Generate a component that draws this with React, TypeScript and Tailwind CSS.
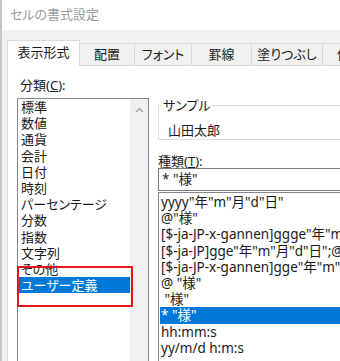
import React from 'react'

const CATEGORIES = [
  '標準', '数値', '通貨', '会計', '日付', '時刻', 'パーセンテージ',
  '分数', '指数', '文字列', 'その他', 'ユーザー定義',
]

const FORMATS = [
  'yyyy"年"m"月"d"日"',
  '@"様"',
  '[$-ja-JP-x-gannen]ggge"年"m"月"d"日"',
  '[$-ja-JP]gge"年"m"月"d"日";@',
  '[$-ja-JP-x-gannen]gge"年"m"月"d"日"',
  '@ "様"',
  ' "様"',
  '* "様"',
  'hh:mm:s',
  'yy/m/d h:m:s',
]

const TABS = [
  { label: '配置', w: 'w-[55px]' },
  { label: 'フォント', w: 'w-[57px]' },
  { label: '罫線', w: 'w-[60px]' },
  { label: '塗りつぶし', w: 'w-[71px]' },
  { label: '保護', w: 'w-[55px]' },
]

export default function App() {
  return (
    <div className="w-[340px] h-[361px] overflow-hidden bg-[#f0f0f0] border-l-2 border-[#c4c4c4] font-['Noto_Sans','Noto_Sans_CJK_JP',sans-serif] [font-feature-settings:'palt'] text-[#1a1a1a]">
      {/* title bar */}
      <div className="h-[30px] bg-white flex items-center pl-[8px] text-[13px] text-[#9a9a9a]">
        セルの書式設定
      </div>

      <div className="pl-[5px] pt-[10px]">
        {/* tabs */}
        <div className="flex items-end h-[25px] text-[13px] whitespace-nowrap">
          <div className="w-[73px] shrink-0 h-[26px] -mb-px relative z-10 bg-white border border-b-0 border-[#d9d9d9] flex items-center justify-center pb-[2px]">
            表示形式
          </div>
          {TABS.map(t => (
            <div
              key={t.label}
              className={`${t.w} shrink-0 h-[22px] border border-l-0 border-b-0 border-[#d9d9d9] flex items-center justify-center`}
            >
              {t.label}
            </div>
          ))}
        </div>

        {/* panel */}
        <div className="h-[300px] bg-white border border-[#d9d9d9] border-r-0 pl-[9px] pt-[9px] flex gap-[9px] text-[13px]">
          {/* category column */}
          <div className="w-[132px] shrink-0 flex flex-col">
            <div className="h-[20px] leading-[20px] pl-[3px]">
              分類(<span className="underline">C</span>):
            </div>
            <div className="relative mt-[3px] h-[280px] border border-[#828790] flex">
              <div className="flex-1 pl-[1px] leading-[16.2px]">
                {CATEGORIES.map(c => (
                  <div
                    key={c}
                    className={`pl-[2px] h-[16.2px] ${c === 'ユーザー定義' ? 'bg-[#0078d7] text-white' : ''}`}
                  >
                    {c}
                  </div>
                ))}
              </div>
              <div className="w-[18px] shrink-0 bg-[#f0f0f0] flex justify-center pt-[8px]">
                <svg width="9" height="6" viewBox="0 0 9 6">
                  <path d="M1 5 L4.5 1.5 L8 5" fill="none" stroke="#a3a3a3" strokeWidth="1.4" />
                </svg>
              </div>
              {/* annotation */}
              <div className="absolute left-[-1px] top-[167px] w-[116px] h-[41px] border-2 border-[#e8141c]" />
            </div>
          </div>

          {/* type column */}
          <div className="flex-1 flex flex-col min-w-0">
            <div className="relative mt-[30px] h-[40px] border border-[#dcdcdc] border-r-0">
              <span className="absolute left-[3px] top-[-10px] bg-white px-[1px] leading-[18px]">サンプル</span>
              <div className="pl-[9px] pt-[15px] leading-[18px]">山田太郎</div>
            </div>
            <div className="mt-[14px] h-[14px] leading-[14px]">
              種類(<span className="underline">T</span>):
            </div>
            <div className="h-[23px] border border-[#7a7a7a] border-r-0 pl-[3px] leading-[21px] whitespace-nowrap text-[13.5px]">
              * "様"
            </div>
            <div className="mt-[1px] h-[200px] border border-[#828790] border-r-0 pt-[1px] pl-[1px] leading-[16.2px] whitespace-pre overflow-hidden text-[13.5px]">
              {FORMATS.map((f, i) => (
                <div
                  key={i}
                  className={`pl-[1px] h-[16.2px] ${f === '* "様"' ? 'bg-[#0078d7] text-white' : ''}`}
                >
                  {f}
                </div>
              ))}
            </div>
          </div>
        </div>
      </div>
    </div>
  )
}
